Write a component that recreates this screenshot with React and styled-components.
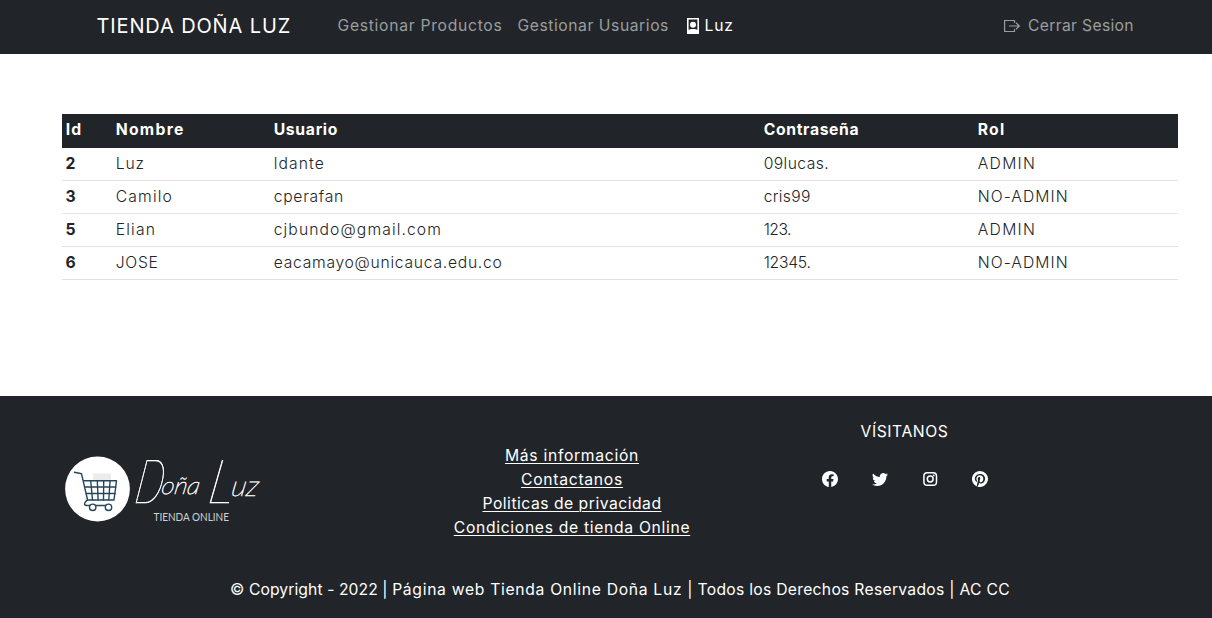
import React from 'react';
import styled, { createGlobalStyle } from 'styled-components';
import { BsFacebook, BsTwitter, BsPinterest } from 'react-icons/bs';

const GlobalStyle = createGlobalStyle`
  * { box-sizing: border-box; }
  body {
    margin: 0;
    background: #fff;
    color: #212529;
    font-family: Inter, "Liberation Sans", sans-serif;
    font-size: 15.7px;
    line-height: 24px;
  }
`;

const Page = styled.div`
  display: flex;
  flex-direction: column;
  min-height: 618px;
`;

const Label = styled.span`
  letter-spacing: ${(p) => p.$track || 0}px;
  white-space: nowrap;
`;

const Navbar = styled.header`
  display: flex;
  align-items: center;
  height: 54px;
  padding: 0 77px 3px 96.5px;
  background: #212529;
`;

const Brand = styled.a`
  width: 241px;
  color: #fff;
  font-size: 20px;
  line-height: 30px;
`;

const Nav = styled.nav`
  display: flex;
  flex: 1;
`;

const NavLink = styled.a`
  display: flex;
  align-items: center;
  width: ${(p) => p.$width}px;
  color: ${(p) => (p.$active ? '#fff' : '#9b9d9f')};

  svg {
    width: 16px;
    height: 16px;
    margin-right: ${(p) => p.$gap || 0}px;
  }
`;

const Main = styled.main`
  flex: 0 0 342px;
  padding: 60px 34px 0 62px;
`;

const Table = styled.table`
  width: 100%;
  table-layout: fixed;
  border-collapse: separate;
  border-spacing: 0;
`;

const HeadRow = styled.tr`
  height: 34px;
  background: #212529;
  color: #fff;
`;

const Row = styled.tr`
  height: 33px;

  > * {
    border-bottom: 1px solid #dee2e6;
  }
`;

const HeadCell = styled.th`
  width: ${(p) => p.$width}px;
  padding: 3px 4px 5px 3.7px;
  text-align: left;
  font-weight: 700;
`;

const IdCell = styled.th`
  padding: 4px 4px 4px 3.5px;
  text-align: left;
  font-weight: 700;
`;

const Cell = styled.td`
  padding: 4px 4px 4px 3.7px;
  font-weight: 300;
`;

const Footer = styled.footer`
  flex: 1;
  padding: 0 34px 0 62px;
  background: #212529;
  color: #fff;
`;

const FooterColumns = styled.div`
  display: grid;
  grid-template-columns: 344px 332px 333px;
  height: 182px;
`;

const LogoColumn = styled.div`
  padding-top: 56px;
`;

const Links = styled.div`
  display: flex;
  flex-direction: column;
  align-items: center;
  padding-top: 48px;
`;

const FooterLink = styled.a`
  color: #fff;
  text-decoration: underline;
  text-decoration-thickness: 1px;
  text-underline-offset: 2px;
`;

const Visit = styled.div`
  display: flex;
  flex-direction: column;
  align-items: center;
  padding-top: 24px;
`;

const Socials = styled.div`
  display: flex;
  gap: 34px;
  margin-top: 27px;

  svg {
    display: block;
    width: 16px;
    height: 16px;
  }
`;

const Copyright = styled.div`
  text-align: center;
  white-space: nowrap;
`;

const LogoSvg = styled.svg`
  display: block;
  width: 204px;
  height: 74px;
  overflow: visible;
`;

const ScriptText = styled.text`
  fill: #fff;
  stroke: #fff;
  stroke-width: 0.7px;
  font-family: Lato, sans-serif;
  font-style: italic;
  font-weight: 100;
`;

const TagLine = styled.text`
  fill: #cfd1d3;
  font-family: Lato, sans-serif;
  font-size: 11px;
`;

function Logo() {
  return (
    <LogoSvg viewBox="0 0 204 74">
      <circle cx="35.5" cy="37" r="32.4" fill="#fff" />
      <rect x="31" y="21.5" width="18" height="8" fill="#ececec" />
      <g fill="none" stroke="#24465c" strokeWidth="1.4" strokeLinecap="round" strokeLinejoin="round">
        <path d="M12.5 20.3 L19.5 21.8 L25.5 47.5 L23 50.5 Q21.5 53.5 25 53.5 H46" />
        <path d="M22 28.8 H54.5 L52 48 H25.5" />
        <path d="M23 35 H53.7 M24.3 41.5 H53 M28.7 28.8 L30.5 48 M35.3 28.8 L36.1 48 M41.7 28.8 L41.5 48 M48.1 28.8 L46.8 48" />
        <circle cx="30.7" cy="55.3" r="3.2" fill="#fff" />
        <circle cx="46.5" cy="55.3" r="3.2" fill="#fff" />
      </g>
      <ScriptText transform="translate(9 0) skewX(-10)">
        <tspan x="71" y="51" fontSize="61" textLength="28" lengthAdjust="spacingAndGlyphs">D</tspan>
        <tspan x="97" y="42" fontSize="24" textLength="45" lengthAdjust="spacingAndGlyphs">oña </tspan>
        <tspan x="144" y="51" fontSize="61" textLength="25" lengthAdjust="spacingAndGlyphs">L</tspan>
        <tspan x="167" y="44" fontSize="29" textLength="27" lengthAdjust="spacingAndGlyphs">uz</tspan>
      </ScriptText>
      <TagLine x="91.5" y="69" textLength="75.5" lengthAdjust="spacingAndGlyphs">TIENDA ONLINE</TagLine>
    </LogoSvg>
  );
}

function BadgeIcon() {
  return (
    <svg viewBox="0 0 16 16">
      <path fill="currentColor" fillRule="evenodd" d="M2 0H14V16H2Z M3.6 1.6V12C4.6 11.2 6 11 8 11S11.4 11.2 12.4 12V1.6Z" />
      <circle cx="8" cy="6.8" r="3" fill="currentColor" />
    </svg>
  );
}

function ExitIcon() {
  return (
    <svg viewBox="0 0 16 16" fill="none" stroke="currentColor" strokeWidth="1.2">
      <path d="M10.5 5V2.5H0.6V13.5H10.5V11M5 8H15M12 4.8L15.3 8L12 11.2" />
    </svg>
  );
}

function InstagramIcon() {
  return (
    <svg viewBox="0 0 16 16" fill="none" stroke="currentColor" strokeWidth="1.5">
      <rect x="1.9" y="1.7" width="12.6" height="12.6" rx="3.3" />
      <circle cx="8.2" cy="8" r="2.9" />
      <circle cx="11.8" cy="4.4" r="0.9" fill="currentColor" stroke="none" />
    </svg>
  );
}

const columns = [
  { title: 'Id', width: 50, track: 1.1 },
  { title: 'Nombre', width: 158, track: 1.3 },
  { title: 'Usuario', width: 490, track: 0.7 },
  { title: 'Contraseña', width: 214, track: 0.66 },
  { title: 'Rol', width: 204, track: 1.25 },
];

const users = [
  { id: '2', cells: [['Luz', 0.9], ['ldante', 1.12], ['09lucas.', 0.4], ['ADMIN', 1.3]] },
  { id: '3', cells: [['Camilo', 1.16], ['cperafan', 0.71], ['cris99', 0.3], ['NO-ADMIN', 1.08]] },
  { id: '5', cells: [['Elian', 1.18], ['cjbundo@gmail.com', 1.1], ['123.', -0.55], ['ADMIN', 1.3]] },
  { id: '6', cells: [['JOSE', 0.7], ['eacamayo@unicauca.edu.co', 0.72], ['12345.', -0.25], ['NO-ADMIN', 1.08]] },
];

const footerLinks = [
  ['Más información', 0.69],
  ['Contactanos', 0.71],
  ['Politicas de privacidad', 0.5],
  ['Condiciones de tienda Online', 0.68],
];

export default function App() {
  return (
    <Page>
      <GlobalStyle />
      <Navbar>
        <Brand><Label $track={0.87}>TIENDA DOÑA LUZ</Label></Brand>
        <Nav>
          <NavLink $width={180}><Label $track={0.71}>Gestionar Productos</Label></NavLink>
          <NavLink $width={167}><Label $track={0.55}>Gestionar Usuarios</Label></NavLink>
          <NavLink $width={60} $gap={4} $active><BadgeIcon /><Label $track={0.76}>Luz</Label></NavLink>
        </Nav>
        <NavLink $width={131} $gap={8}><ExitIcon /><Label $track={0.32}>Cerrar Sesion</Label></NavLink>
      </Navbar>
      <Main>
        <Table>
          <thead>
            <HeadRow>
              {columns.map((c) => (
                <HeadCell key={c.title} $width={c.width}><Label $track={c.track}>{c.title}</Label></HeadCell>
              ))}
            </HeadRow>
          </thead>
          <tbody>
            {users.map((u) => (
              <Row key={u.id}>
                <IdCell>{u.id}</IdCell>
                {u.cells.map(([text, track]) => (
                  <Cell key={text}><Label $track={track}>{text}</Label></Cell>
                ))}
              </Row>
            ))}
          </tbody>
        </Table>
      </Main>
      <Footer>
        <FooterColumns>
          <LogoColumn><Logo /></LogoColumn>
          <Links>
            {footerLinks.map(([text, track]) => (
              <FooterLink key={text}><Label $track={track}>{text}</Label></FooterLink>
            ))}
          </Links>
          <Visit>
            <Label $track={0.56}>VÍSITANOS</Label>
            <Socials>
              <BsFacebook />
              <BsTwitter />
              <InstagramIcon />
              <BsPinterest />
            </Socials>
          </Visit>
        </FooterColumns>
        <Copyright>
          <Label $track={0.08}>© Copyright - 2022 | </Label>
          <Label $track={0.69}>Página web Tienda Online Doña Luz </Label>
          <Label $track={0.28}>| Todos los Derechos Reservados | AC CC</Label>
        </Copyright>
      </Footer>
    </Page>
  );
}
